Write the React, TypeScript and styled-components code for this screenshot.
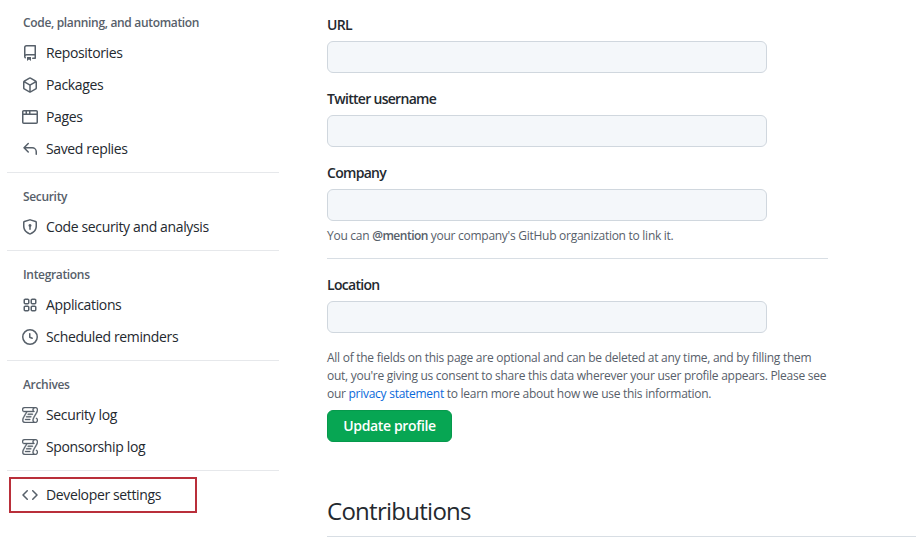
import { ReactNode } from 'react';
import { GoLog } from 'react-icons/go';
import styled, { createGlobalStyle } from 'styled-components';

const GlobalStyle = createGlobalStyle`
    html, body {
        margin: 0;
        padding: 0;
        background: #fff;
    }

    body {
        width: 916px;
        height: 539px;
        overflow: hidden;
        font-family: "Open Sans", "Noto Sans", "Liberation Sans", sans-serif;
        font-size: 14px;
        color: #24292f;
    }
`;

const Page = styled.div`
    display: flex;
    height: 539px;
    overflow: hidden;
`;

const Sidebar = styled.nav`
    width: 272px;
    margin-left: 7px;
    flex-shrink: 0;
    padding-top: 7px;
`;

const NavGroup = styled.div`
    padding-bottom: 7px;
    border-bottom: 1px solid #e6e8eb;
    margin-bottom: 8px;

    &:last-child {
        border-bottom: 0;
    }
`;

const NavHeading = styled.h3`
    margin: 0;
    height: 30px;
    padding-left: 16px;
    font-size: 12px;
    line-height: 32px;
    font-weight: 600;
    letter-spacing: -0.33px;
    color: #57606a;
`;

const NavItem = styled.div`
    position: relative;
    display: flex;
    align-items: center;
    gap: 8px;
    height: 32px;
    padding-left: 15px;
    font-size: 14px;
    letter-spacing: -0.36px;
    color: #24292f;

    svg {
        width: 16px;
        height: 16px;
        flex-shrink: 0;
        color: #57606a;
    }
`;

const NavLabel = styled.span`
    padding-bottom: 2px;
`;

const Highlight = styled.div`
    position: absolute;
    left: 2px;
    top: -2px;
    width: 188px;
    height: 36px;
    box-sizing: border-box;
    border: 2px solid #b92f3a;
`;

const Main = styled.main`
    width: 501px;
    margin-left: 48px;
    flex-shrink: 0;
`;

const Field = styled.div`
    display: flex;
    flex-direction: column;
    height: 74px;
`;

const Label = styled.label`
    height: 32px;
    margin-top: 9px;
    font-size: 14px;
    line-height: 32px;
    font-weight: 600;
    letter-spacing: -0.7px;
    color: #24292f;
`;

const TextInput = styled.input`
    display: block;
    flex-shrink: 0;
    width: 440px;
    height: 32px;
    box-sizing: border-box;
    padding: 5px 12px;
    background: #f4f7fa;
    border: 1px solid #d0d7de;
    border-radius: 6px;
`;

const Note = styled.p<{ $top: number }>`
    margin: ${({ $top }) => $top}px 0 0;
    font-size: 12px;
    line-height: 18px;
    letter-spacing: -0.27px;
    color: #57606a;
    white-space: nowrap;

    strong {
        font-weight: 600;
        letter-spacing: -0.5px;
    }
`;

const Divider = styled.hr`
    margin: 13px 0 1px;
    border: 0;
    border-top: 1px solid #d8dee4;
`;

const Link = styled.a`
    color: #0969da;
`;

const SaveButton = styled.button`
    display: block;
    width: 125px;
    height: 32px;
    margin-top: 7px;
    padding: 0 0 2px;
    background: #07a653;
    border: 1px solid #06994c;
    border-radius: 6px;
    color: #fff;
    font: 600 14px "Open Sans", "Noto Sans", "Liberation Sans", sans-serif;
    letter-spacing: -0.36px;
`;

const SectionTitle = styled.h2`
    width: 589px;
    margin: 51px 0 0;
    padding-bottom: 7px;
    border-bottom: 1px solid #d8dee4;
    font-size: 24px;
    line-height: 36px;
    font-weight: 400;
    letter-spacing: -0.73px;
    color: #24292f;
`;

const LogIcon = styled(GoLog)`
    stroke: currentColor;
    stroke-width: 0.6;
`;

const Octicon = ({ d }: { d: string }) => (
    <svg viewBox="0 0 16 16" fill="currentColor">
        <path d={d} />
    </svg>
);

const icons = {
    repo: 'M2 2.5A2.5 2.5 0 0 1 4.5 0h8.75a.75.75 0 0 1 .75.75v12.5a.75.75 0 0 1-.75.75h-2.5a.75.75 0 0 1 0-1.5h1.75v-2h-8a1 1 0 0 0-.714 1.7.75.75 0 1 1-1.072 1.05A2.495 2.495 0 0 1 2 11.5Zm10.5-1h-8a1 1 0 0 0-1 1v6.708A2.486 2.486 0 0 1 4.5 9h8ZM5 12.25a.25.25 0 0 1 .25-.25h3.5a.25.25 0 0 1 .25.25v3.25a.25.25 0 0 1-.4.2l-1.45-1.087a.249.249 0 0 0-.3 0L5.4 15.7a.25.25 0 0 1-.4-.2Z',
    pkg: 'm8.878.392 5.25 3.045c.54.314.872.89.872 1.514v6.098a1.75 1.75 0 0 1-.872 1.514l-5.25 3.045a1.75 1.75 0 0 1-1.756 0l-5.25-3.045A1.75 1.75 0 0 1 1 11.049V4.951c0-.624.332-1.201.872-1.514L7.122.392a1.75 1.75 0 0 1 1.756 0ZM7.875 1.69l-4.63 2.685L8 7.133l4.755-2.758-4.63-2.685a.248.248 0 0 0-.25 0ZM2.5 5.677v5.372c0 .09.047.171.125.216l4.625 2.683V8.432Zm6.25 8.271 4.625-2.683a.25.25 0 0 0 .125-.216V5.677L8.75 8.432Z',
    browser: 'M0 2.75C0 1.784.784 1 1.75 1h12.5c.966 0 1.75.784 1.75 1.75v10.5A1.75 1.75 0 0 1 14.25 15H1.75A1.75 1.75 0 0 1 0 13.25ZM14.5 6h-13v7.25c0 .138.112.25.25.25h12.5a.25.25 0 0 0 .25-.25Zm-6-3.5v2h6v-1.75a.25.25 0 0 0-.25-.25ZM5 2.5v2h2v-2Zm-3.25 0a.25.25 0 0 0-.25.25V4.5h2v-2Z',
    reply: 'M6.78 1.97a.75.75 0 0 1 0 1.06L3.81 6h6.44A4.75 4.75 0 0 1 15 10.75v2.5a.75.75 0 0 1-1.5 0v-2.5a3.25 3.25 0 0 0-3.25-3.25H3.81l2.97 2.97a.749.749 0 0 1-.326 1.275.749.749 0 0 1-.734-.215L1.47 7.28a.75.75 0 0 1 0-1.06l4.25-4.25a.75.75 0 0 1 1.06 0Z',
    shield: 'm8.533.133 5.25 1.68A1.75 1.75 0 0 1 15 3.48V7c0 1.566-.32 3.182-1.303 4.682-.983 1.498-2.585 2.813-5.032 3.855a1.697 1.697 0 0 1-1.33 0c-2.447-1.042-4.049-2.357-5.032-3.855C1.32 10.182 1 8.566 1 7V3.48a1.75 1.75 0 0 1 1.217-1.667l5.25-1.68a1.748 1.748 0 0 1 1.066 0Zm-.61 1.429.001.001-5.25 1.68a.251.251 0 0 0-.174.237V7c0 1.36.275 2.666 1.057 3.859.784 1.194 2.121 2.342 4.366 3.298a.196.196 0 0 0 .154 0c2.245-.957 3.582-2.103 4.366-3.297C13.225 9.666 13.5 8.358 13.5 7V3.48a.25.25 0 0 0-.174-.238l-5.25-1.68a.25.25 0 0 0-.153 0ZM9.5 6.5c0 .536-.286 1.032-.75 1.3v2.45a.75.75 0 0 1-1.5 0V7.8A1.5 1.5 0 1 1 9.5 6.5Z',
    apps: 'M1.5 3.25c0-.966.784-1.75 1.75-1.75h2.5c.966 0 1.75.784 1.75 1.75v2.5A1.75 1.75 0 0 1 5.75 7.5h-2.5A1.75 1.75 0 0 1 1.5 5.75Zm7 0c0-.966.784-1.75 1.75-1.75h2.5c.966 0 1.75.784 1.75 1.75v2.5a1.75 1.75 0 0 1-1.75 1.75h-2.5A1.75 1.75 0 0 1 8.5 5.75Zm-7 7c0-.966.784-1.75 1.75-1.75h2.5c.966 0 1.75.784 1.75 1.75v2.5a1.75 1.75 0 0 1-1.75 1.75h-2.5a1.75 1.75 0 0 1-1.75-1.75Zm7 0c0-.966.784-1.75 1.75-1.75h2.5c.966 0 1.75.784 1.75 1.75v2.5a1.75 1.75 0 0 1-1.75 1.75h-2.5a1.75 1.75 0 0 1-1.75-1.75ZM3.25 3a.25.25 0 0 0-.25.25v2.5c0 .138.112.25.25.25h2.5A.25.25 0 0 0 6 5.75v-2.5A.25.25 0 0 0 5.75 3Zm7 0a.25.25 0 0 0-.25.25v2.5c0 .138.112.25.25.25h2.5a.25.25 0 0 0 .25-.25v-2.5a.25.25 0 0 0-.25-.25Zm-7 7a.25.25 0 0 0-.25.25v2.5c0 .138.112.25.25.25h2.5a.25.25 0 0 0 .25-.25v-2.5a.25.25 0 0 0-.25-.25Zm7 0a.25.25 0 0 0-.25.25v2.5c0 .138.112.25.25.25h2.5a.25.25 0 0 0 .25-.25v-2.5a.25.25 0 0 0-.25-.25Z',
    clock: 'M8 0a8 8 0 1 1 0 16A8 8 0 0 1 8 0ZM1.5 8a6.5 6.5 0 1 0 13 0 6.5 6.5 0 0 0-13 0Zm7-3.25v2.992l2.028.812a.75.75 0 0 1-.557 1.392l-2.5-1A.751.751 0 0 1 7 8.25v-3.5a.75.75 0 0 1 1.5 0Z',
    code: 'm11.28 3.22 4.25 4.25a.75.75 0 0 1 0 1.06l-4.25 4.25a.749.749 0 0 1-1.275-.326.749.749 0 0 1 .215-.734L13.94 8l-3.72-3.72a.749.749 0 0 1 .326-1.275.749.749 0 0 1 .734.215Zm-6.56 0a.751.751 0 0 1 1.042.018.751.751 0 0 1 .018 1.042L2.06 8l3.72 3.72a.749.749 0 0 1-.326 1.275.749.749 0 0 1-.734-.215L.47 8.53a.75.75 0 0 1 0-1.06Z',
};

type NavEntry = { icon: ReactNode; label: string };

const groups: { title: string; items: NavEntry[] }[] = [
    {
        title: 'Code, planning, and automation',
        items: [
            { icon: <Octicon d={icons.repo} />, label: 'Repositories' },
            { icon: <Octicon d={icons.pkg} />, label: 'Packages' },
            { icon: <Octicon d={icons.browser} />, label: 'Pages' },
            { icon: <Octicon d={icons.reply} />, label: 'Saved replies' },
        ],
    },
    {
        title: 'Security',
        items: [{ icon: <Octicon d={icons.shield} />, label: 'Code security and analysis' }],
    },
    {
        title: 'Integrations',
        items: [
            { icon: <Octicon d={icons.apps} />, label: 'Applications' },
            { icon: <Octicon d={icons.clock} />, label: 'Scheduled reminders' },
        ],
    },
    {
        title: 'Archives',
        items: [
            { icon: <LogIcon />, label: 'Security log' },
            { icon: <LogIcon />, label: 'Sponsorship log' },
        ],
    },
];

export default function App() {
    return (
        <Page>
            <GlobalStyle />
            <Sidebar>
                {groups.map((group) => (
                    <NavGroup key={group.title}>
                        <NavHeading>{group.title}</NavHeading>
                        {group.items.map((item) => (
                            <NavItem key={item.label}>
                                {item.icon}
                                <NavLabel>{item.label}</NavLabel>
                            </NavItem>
                        ))}
                    </NavGroup>
                ))}
                <NavGroup>
                    <NavItem>
                        <Octicon d={icons.code} />
                        <NavLabel>Developer settings</NavLabel>
                        <Highlight />
                    </NavItem>
                </NavGroup>
            </Sidebar>
            <Main>
                <Field>
                    <Label>URL</Label>
                    <TextInput />
                </Field>
                <Field>
                    <Label>Twitter username</Label>
                    <TextInput />
                </Field>
                <Field>
                    <Label>Company</Label>
                    <TextInput />
                </Field>
                <Note $top={5}>
                    You can <strong>@mention</strong> your company's GitHub organization to link it.
                </Note>
                <Divider />
                <Field>
                    <Label>Location</Label>
                    <TextInput />
                </Field>
                <Note $top={15}>
                    All of the fields on this page are optional and can be deleted at any time, and by filling them
                    <br />
                    out, you're giving us consent to share this data wherever your user profile appears. Please see
                    <br />
                    our <Link>privacy statement</Link> to learn more about how we use this information.
                </Note>
                <SaveButton>Update profile</SaveButton>
                <SectionTitle>Contributions</SectionTitle>
            </Main>
        </Page>
    );
}
